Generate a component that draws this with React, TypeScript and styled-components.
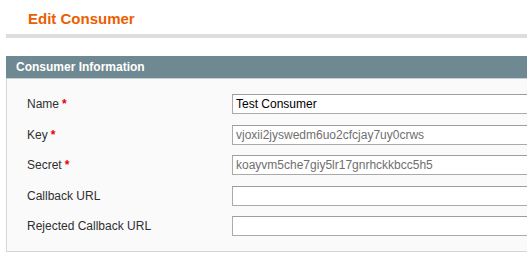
import { Fragment } from "react"
import styled, { createGlobalStyle } from "styled-components"

const GlobalStyle = createGlobalStyle`
  html, body {
    margin: 0;
    padding: 0;
    background: #ffffff;
  }
  body {
    font-family: "Liberation Sans", Arial, Helvetica, sans-serif;
    font-size: 12px;
    color: #2f2f2f;
  }
`

const Page = styled.div`
  padding-left: 6px;
  overflow: hidden;
`

const TitleBar = styled.div`
  padding: 10px 0 6px 22px;
  border-bottom: 4px solid #dddddd;
`

const Title = styled.h3`
  margin: 0;
  font-size: 15px;
  line-height: 18px;
  font-weight: bold;
  color: #eb5e00;
`

const Fieldset = styled.section`
  margin-top: 18px;
`

const Legend = styled.div`
  height: 22px;
  line-height: 22px;
  padding-left: 10px;
  background: #6f8992;
  border-bottom: 1px solid #c6cfd2;
  color: #ffffff;
  font-weight: bold;
  font-size: 12px;
`

const Body = styled.div`
  background: #fafafa;
  border-left: 1px solid #d6d6d6;
  border-bottom: 1px solid #d6d6d6;
  padding: 15px 0 15px 20px;
  display: grid;
  grid-template-columns: 205px 1fr;
  row-gap: 10.5px;
  align-items: center;
  overflow: hidden;
`

const Label = styled.label`
  font-size: 12px;
  color: #2f2f2f;
`

const Required = styled.span`
  color: #eb0000;
  font-weight: bold;
  margin-left: 3px;
`

const Input = styled.input<{ $muted?: boolean }>`
  box-sizing: border-box;
  width: 330px;
  height: 20px;
  margin: 0;
  padding: 0 3px;
  border: 1px solid #aaaaaa;
  border-top-color: #9d9d9d;
  background: #ffffff;
  font-family: "Liberation Sans", Arial, Helvetica, sans-serif;
  font-size: 12px;
  color: ${({ $muted }) => ($muted ? "#6f6f6f" : "#000000")};
  outline: none;
`

const fields = [
  { label: "Name", required: true, value: "Test Consumer", muted: false },
  { label: "Key", required: true, value: "vjoxii2jyswedm6uo2cfcjay7uy0crws", muted: true },
  { label: "Secret", required: true, value: "koayvm5che7giy5lr17gnrhckkbcc5h5", muted: true },
  { label: "Callback URL", required: false, value: "", muted: false },
  { label: "Rejected Callback URL", required: false, value: "", muted: false },
]

export default function App() {
  return (
    <>
      <GlobalStyle />
      <Page>
        <TitleBar>
          <Title>Edit Consumer</Title>
        </TitleBar>
        <Fieldset>
          <Legend>Consumer Information</Legend>
          <Body>
            {fields.map((f) => (
              <Fragment key={f.label}>
                <Label>
                  {f.label}
                  {f.required && <Required>*</Required>}
                </Label>
                <Input $muted={f.muted} defaultValue={f.value} readOnly={f.muted} />
              </Fragment>
            ))}
          </Body>
        </Fieldset>
      </Page>
    </>
  )
}
